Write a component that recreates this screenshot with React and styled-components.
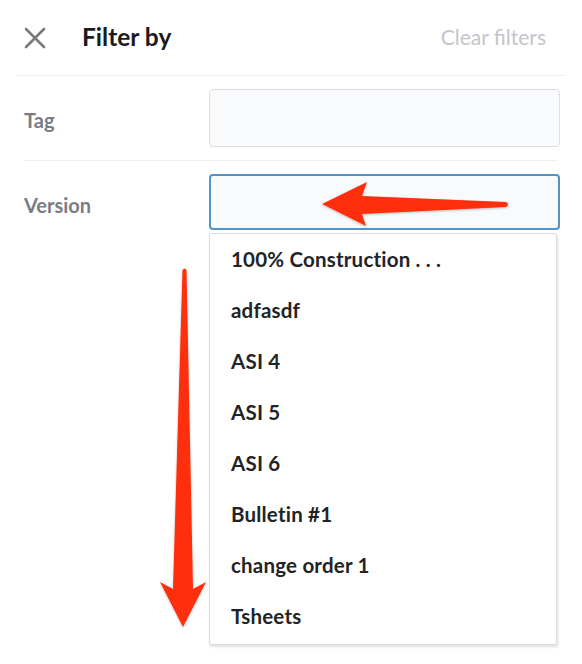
import styled, { createGlobalStyle } from "styled-components";

const GlobalStyle = createGlobalStyle`
  html, body {
    margin: 0;
    padding: 0;
    background: #ffffff;
  }
  body {
    font-family: Lato, "Noto Sans", "Liberation Sans", sans-serif;
  }
`;

const Panel = styled.div`
  position: relative;
  width: 582px;
  height: 664px;
  background: #fff;
`;

const Header = styled.div`
  display: flex;
  align-items: center;
  height: 75px;
  margin: 0 17px;
  padding: 0 19px 0 6px;
  border-bottom: 1px solid #eeeff1;
`;

const CloseButton = styled.button`
  display: flex;
  align-items: center;
  justify-content: center;
  width: 24px;
  height: 24px;
  padding: 0;
  border: 0;
  background: none;
  color: #7b7b7d;
  cursor: pointer;
`;

const Title = styled.h2`
  margin: -3px 0 0 35px;
  font-size: 24.5px;
  font-weight: 700;
  color: #1b1b1d;
  flex: 1;
`;

const ClearLink = styled.span`
  margin-top: -3px;
  font-size: 21px;
  color: #c3c5cb;
`;

const Row = styled.div`
  display: flex;
  align-items: center;
  margin: 0 24px;
  padding: 13px 0;
  border-bottom: ${(p) => (p.$last ? "none" : "1px solid #eeeff1")};
`;

const Label = styled.div`
  width: 185px;
  font-size: 20px;
  font-weight: 700;
  color: #7a7c85;
  margin-top: ${(p) => p.$shift || 0}px;
`;

const Field = styled.div`
  position: relative;
  width: 351px;
  margin-right: -2px;
`;

const Input = styled.div`
  box-sizing: border-box;
  height: ${(p) => (p.$focused ? 56 : 58)}px;
  border-radius: 4px;
  background: #f9fafc;
  border: ${(p) => (p.$focused ? "2px solid #5295c3" : "1px solid #dcdde1")};
`;

const Menu = styled.ul`
  position: absolute;
  top: calc(100% + 3px);
  left: 0;
  width: 348px;
  box-sizing: border-box;
  margin: 0;
  padding: 0 0 2px;
  list-style: none;
  background: #fff;
  border: 1px solid #dadbde;
  border-radius: 2px;
  box-shadow: 1px 2px 3px rgba(0, 0, 0, 0.12);
`;

const Item = styled.li`
  height: 51px;
  display: flex;
  align-items: center;
  padding: 0 0 2px 21px;
  box-sizing: border-box;
  font-size: 20.5px;
  letter-spacing: 0.2px;
  font-weight: 700;
  color: #222326;
`;

const Overlay = styled.svg`
  position: absolute;
  left: 0;
  top: 0;
  pointer-events: none;
`;

const versions = [
  "100% Construction . . .",
  "adfasdf",
  "ASI 4",
  "ASI 5",
  "ASI 6",
  "Bulletin #1",
  "change order 1",
  "Tsheets",
];

export default function App() {
  return (
    <>
      <GlobalStyle />
      <Panel>
        <Header>
          <CloseButton aria-label="Close">
            <svg width="22" height="22" viewBox="0 0 22 22">
              <path
                d="M2 2 L20 20 M20 2 L2 20"
                stroke="currentColor"
                strokeWidth="2.6"
                strokeLinecap="round"
              />
            </svg>
          </CloseButton>
          <Title>Filter by</Title>
          <ClearLink>Clear filters</ClearLink>
        </Header>

        <Row>
          <Label $shift={4}>Tag</Label>
          <Field>
            <Input />
          </Field>
        </Row>

        <Row $last>
          <Label $shift={6}>Version</Label>
          <Field>
            <Input $focused />
            <Menu>
              {versions.map((v) => (
                <Item key={v}>{v}</Item>
              ))}
            </Menu>
          </Field>
        </Row>

        <Overlay width="582" height="664" viewBox="0 0 582 664">
          <defs>
            <filter id="soft" x="-10%" y="-10%" width="120%" height="120%">
              <feDropShadow dx="0" dy="1" stdDeviation="1" floodColor="#000" floodOpacity="0.25" />
            </filter>
          </defs>
          <path
            d="M322 204 L367 182 L362 196 L506 202 Q510 204.5 506 207 L362 214 L366 226 Z"
            fill="#ff2d0a"
            filter="url(#soft)"
          />
          <path
            d="M182.5 270 Q184.5 267 186.5 270 L193 589 L206 582 L183 627 L160 582 L173 589 Z"
            fill="#ff2d0a"
            filter="url(#soft)"
          />
        </Overlay>
      </Panel>
    </>
  );
}
